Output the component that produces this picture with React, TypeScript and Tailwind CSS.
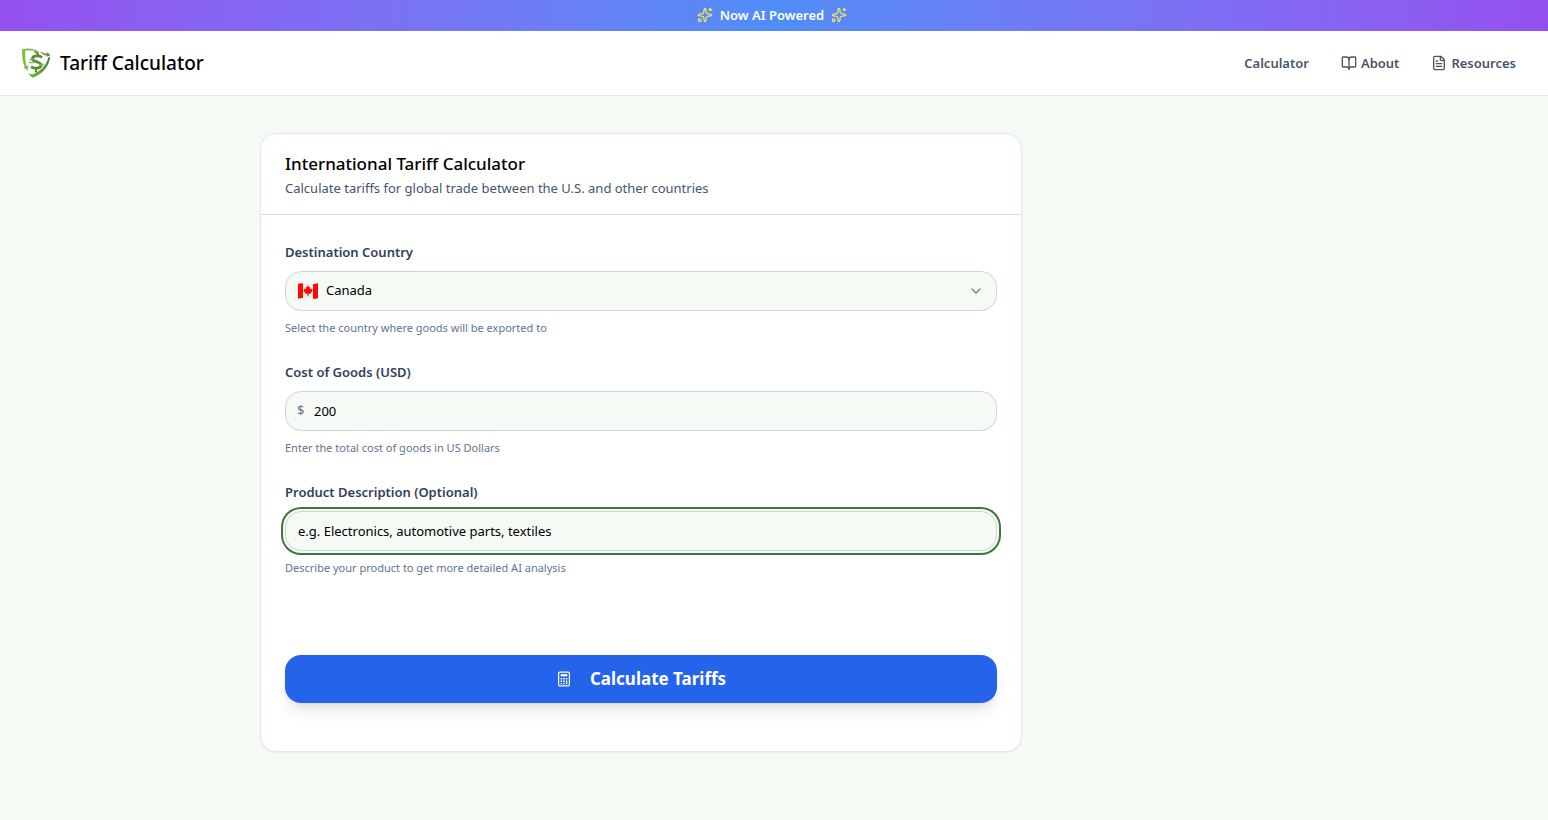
import { useState } from 'react'
import { BookOpen, ChevronDown, FileText, Sparkles } from 'lucide-react'

const countries = ['Canada', 'Mexico', 'China', 'Germany', 'Japan']

const fieldClass =
  'block w-full h-10 rounded-2xl border border-[#cbd5e1] bg-[#f5faf5] text-[13px] text-black outline-none'
const labelClass = 'block text-[13px] leading-[22px] font-semibold text-slate-700'
const hintClass = 'text-[11px] leading-[18px] text-slate-500'

function Logo() {
  return (
    <svg className="w-8 h-8" viewBox="0 0 32 32" fill="none" aria-hidden="true">
      <defs>
        <linearGradient id="shield" x1="1" y1="0" x2="0" y2="1">
          <stop offset="0" stopColor="#3f7a2e" />
          <stop offset="1" stopColor="#7cb83a" />
        </linearGradient>
      </defs>
      {/* left edge */}
      <path
        d="M2.200 2C8 .8 14 1.300 19.500 4.500L18.500 5C14 3.400 9.500 3.200 5.300 3.800C5 10 5.300 15 6.600 19L8.500 18.500L7.500 23.500L3.500 20.500L4.600 20C2.400 14.500 1.800 8 2.200 2Z"
        fill="#84bd3c"
      />
      {/* top right tip */}
      <path d="M20 4.500C23 6.300 25 6.500 27 6.500L27.500 5.200L30.500 8.200L26.800 9.800L26.600 8.500C23.500 8.300 21.500 7 20 4.500Z" fill="#66943c" />
      {/* right edge */}
      <path d="M28.300 10.500L30.200 9.500C29.500 17.500 24.500 26.500 12.500 30.800C11 29.600 9.500 28.200 8.200 26.600L13 27.300C21 24 26.500 18 28.300 10.500Z" fill="url(#shield)" />
      <path
        d="M22 10.500C19 8 12.500 8.500 12.500 11.800C12.500 15.300 21 14.200 21 18C21 21.700 14.500 22 11 19.800"
        stroke="#568b36"
        strokeWidth="2.800"
      />
      <path d="M14.500 4.500L18 6.500V9M16 21V25.500" stroke="#568b36" strokeWidth="2" />
      <path d="M9.500 12.500H13M9 15.500H14M19 17.500H24" stroke="#84bd3c" strokeWidth="1.300" />
    </svg>
  )
}

function CanadaFlag() {
  return (
    <svg className="w-5 h-4" viewBox="0 0 20 16" aria-hidden="true">
      <path d="M0 .8C4-.3 7 .5 10 1S16 1.400 20 .3V15.200C16 16.300 13 15.500 10 15S4 14.600 0 15.700Z" fill="#e9ebe9" />
      <path d="M0 .8C2 .2 3.500 .1 5 .2V14.900C3.500 14.900 2 15.200 0 15.700Z" fill="#ff0808" />
      <path d="M15 1.200C16.700 1.100 18.300 .8 20 .3V15.200C18.300 15.700 16.700 15.900 15 15.800Z" fill="#ff0808" />
      <path
        d="M10 2.300L11.200 4.400L12.300 3.900L12 6.300L13.300 5.400L13.700 6.500L14.700 6.700L14 8.700L11.800 10.900L10.500 10.700V13H9.500V10.700L8.200 10.900L6 8.600L5.400 6.700L6.300 6.400L6.700 5.200L8.200 6.200L7.800 3.700L8.900 4.300Z"
        fill="#ff0808"
      />
    </svg>
  )
}

function CalculatorIcon() {
  return (
    <svg className="w-3 h-4" viewBox="0 0 12 16" fill="none" stroke="currentColor" aria-hidden="true">
      <rect x=".6" y="1.100" width="10.800" height="13.800" rx="1.200" strokeWidth="1.200" />
      <path d="M3 3.500H9V5H3Z" fill="currentColor" strokeWidth=".8" />
      <path d="M2.600 7.800H4.200M5.200 7.800H6.800M7.800 7.800H9.400M2.600 10.200H4.200M5.200 10.200H6.800M2.600 12.600H4.200M5.200 12.600H6.800" strokeWidth="1.400" />
      <path d="M8.600 9.500V13.300" strokeWidth="1.400" />
    </svg>
  )
}

export default function App() {
  const [country, setCountry] = useState('Canada')
  const [cost, setCost] = useState('200')
  const [description, setDescription] = useState('')

  return (
    <div className="min-h-screen bg-[#f5faf5] font-['Noto_Sans',sans-serif] text-black">
      {/* Banner */}
      <div className="flex items-center justify-center gap-[7px] pr-1 pb-0.5 h-[31px] bg-linear-to-r from-[#9450ef] via-[#4f8df7] to-[#9450ef] text-white">
        <Sparkles className="h-4 w-4 text-[#efdf6c]" />
        <span className="text-[13px] leading-5 font-semibold">Now AI Powered</span>
        <Sparkles className="h-4 w-4 text-[#efdf6c]" />
      </div>

      {/* Header */}
      <header className="flex items-center justify-between h-[65px] pl-5 pr-8 bg-white border-b border-[#e2e8f0]">
        <a href="#" className="flex items-center gap-2">
          <Logo />
          <span className="text-[19px] leading-7 font-medium">Tariff Calculator</span>
        </a>
        <nav className="flex items-center gap-8 text-[13px] leading-5 font-semibold text-[#475569]">
          <a href="#calculator">Calculator</a>
          <a href="#about" className="flex items-center gap-1">
            <BookOpen className="h-4 w-4" />
            About
          </a>
          <a href="#resources" className="flex items-center gap-1">
            <FileText className="h-4 w-4" />
            Resources
          </a>
        </nav>
      </header>

      {/* Main content */}
      <main className="max-w-[1028px] mx-auto pt-[37px] pb-8">
        <section className="w-full max-w-[762px] rounded-2xl border border-[#e2e8f0] bg-white shadow-[0_1px_2px_rgba(0,0,0,0.05)]">
          <div className="px-6 pt-4 pb-4 border-b border-[#d3e3cf]">
            <h1 className="text-[17px] leading-7 font-medium">International Tariff Calculator</h1>
            <p className="text-[13px] leading-5 text-slate-600">
              Calculate tariffs for global trade between the U.S. and other countries
            </p>
          </div>

          <form className="px-6 pt-[26px] pb-12" onSubmit={(e) => e.preventDefault()}>
            <div className="space-y-6">
              <div className="space-y-2">
                <label htmlFor="country" className={labelClass}>
                  Destination Country
                </label>
                <div className="relative">
                  <select
                    id="country"
                    value={country}
                    onChange={(e) => setCountry(e.target.value)}
                    className={`${fieldClass} appearance-none pl-10 pr-10`}
                  >
                    {countries.map((name) => (
                      <option key={name}>{name}</option>
                    ))}
                  </select>
                  <span className="absolute inset-y-0 left-[13px] flex items-center pointer-events-none">
                    <CanadaFlag />
                  </span>
                  <ChevronDown className="absolute right-[13px] top-3 h-4 w-4 text-[#7b7d7b] pointer-events-none" />
                </div>
                <p className={hintClass}>Select the country where goods will be exported to</p>
              </div>

              <div className="space-y-2">
                <label htmlFor="cost" className={labelClass}>
                  Cost of Goods (USD)
                </label>
                <div className="relative">
                  <span className="absolute inset-y-0 left-3 flex items-center text-[13px] text-slate-500">$</span>
                  <input
                    id="cost"
                    type="text"
                    inputMode="decimal"
                    value={cost}
                    onChange={(e) => setCost(e.target.value)}
                    className={`${fieldClass} pl-7 pr-3`}
                  />
                </div>
                <p className={hintClass}>Enter the total cost of goods in US Dollars</p>
              </div>

              <div className="space-y-2">
                <label htmlFor="description" className={labelClass}>
                  Product Description (Optional)
                </label>
                <input
                  id="description"
                  type="text"
                  value={description}
                  onChange={(e) => setDescription(e.target.value)}
                  placeholder="e.g. Electronics, automotive parts, textiles"
                  className={`${fieldClass} px-3 placeholder:text-black ring-2 ring-[#41753a] ring-offset-2 ring-offset-[#f5faf5]`}
                />
                <p className={hintClass}>Describe your product to get more detailed AI analysis</p>
              </div>
            </div>

            <button
              type="submit"
              className="flex items-center justify-center gap-5 w-full h-12 mt-[78px] pl-0.5 rounded-2xl bg-[#2563eb] text-[17px] font-bold text-white shadow-lg"
            >
              <CalculatorIcon />
              Calculate Tariffs
            </button>
          </form>
        </section>
      </main>
    </div>
  )
}
